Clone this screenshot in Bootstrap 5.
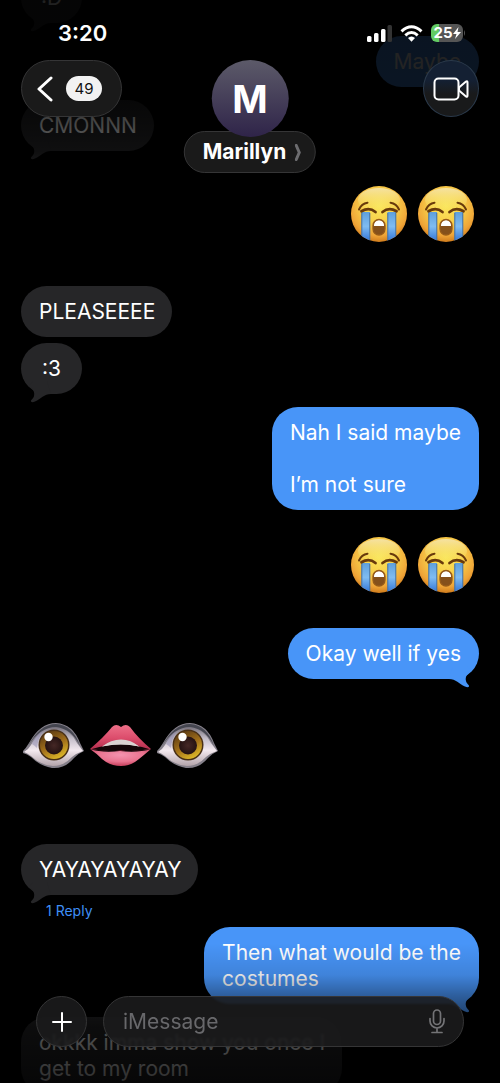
<!DOCTYPE html>
<html lang="en" data-bs-theme="dark">
<head>
<meta charset="utf-8">
<meta name="viewport" content="width=device-width, initial-scale=1">
<title>Marillyn</title>
<link href="https://cdn.jsdelivr.net/npm/bootstrap@5.3.0/dist/css/bootstrap.min.css" rel="stylesheet">
<style>
  body { background: #000; color: #fff; font-family: Inter, "Liberation Sans", sans-serif; font-size: 21px; line-height: 26px; }
  svg { display: block; }
  .screen { height: 100vh; }
  .thread { padding: 0 21px; margin-top: -28px; }
  .bubble { position: relative; flex: none; padding: 13px 17px 12px 18px; border-radius: 26px; background: #262628; min-width: 61px; max-width: 340px; }
  .bubble.sent { background: #4895f8; align-self: flex-end; padding-right: 18px; }
  .bubble.short { padding-left: 12px; padding-right: 12px; text-align: center; }
  .tail { position: absolute; left: 8px; bottom: -10px; width: 22px; height: 23px; fill: #262628; }
  .sent .tail { left: auto; right: 8px; transform: scaleX(-1); fill: #4895f8; }
  .faces { gap: 11px; padding-right: 5px; }
  .faces svg { width: 56px; height: 56px; }
  .parts { gap: 6px; padding-left: 2px; }
  .parts svg { width: 61px; height: 46px; }
  .reply { font-size: 14px; line-height: 16px; color: #3f8ff7; padding-left: 25px; }
  .gap-xs { margin-top: 6px; } .gap-sm { margin-top: 8px; } .gap-md { margin-top: 13px; } .gap-lg { margin-top: 27px; }
  .gap-xl { margin-top: 35px; } .gap-2x { margin-top: 44px; } .gap-3x { margin-top: 75px; }

  .top-area { background: linear-gradient(rgba(0,0,0,.87) 0, rgba(0,0,0,.86) 88px, rgba(0,0,0,.72) 126px, rgba(0,0,0,.6) 152px, rgba(0,0,0,0) 182px); height: 182px; }
  .status { height: 60px; padding: 6px 34px 0 58px; }
  .clock { font-size: 22px; font-weight: 600; }
  .battery { width: 32px; height: 18px; border-radius: 6px; background: linear-gradient(90deg, #63cb63 26%, #555 26%); font-size: 15px; line-height: 18px; font-weight: 700; }
  .glass { background: #1a1a1a; border: 1px solid #353536; color: #fff; padding: 0; }
  .back { width: 101px; height: 57px; border-radius: 29px; padding: 0 19px 0 15px; }
  .count { background: #f2f2f2; color: #111; border-radius: 13px; width: 36px; height: 25px; font-size: 15px; line-height: 25px; }
  .bar { padding: 0 21px; }
  .video { width: 56px; height: 57px; border-color: #2b3a4b; background: linear-gradient(#142033 35%, #191a1b 60%); }
  .contact { color: #fff; text-decoration: none; }
  .avatar { width: 77px; height: 77px; background: linear-gradient(#5c5a69, #2f2449); font-size: 38px; font-weight: 700; z-index: 1; }
  .person { height: 42px; margin-top: -6px; border-radius: 21px; padding: 0 13px 0 18px; font-size: 21px; font-weight: 700; gap: 9px; }

  .bottom-area { height: 140px; padding: 0 36px 36px; background: linear-gradient(rgba(0,0,0,0) 0, rgba(0,0,0,.12) 32px, rgba(0,0,0,.36) 52px, rgba(0,0,0,.5) 66px, rgba(0,0,0,.68) 84px, rgba(0,0,0,.82) 140px); }
  .bottom-area .glass { background: rgba(27,27,28,.88); backdrop-filter: blur(1px); }
  .plus { width: 51px; height: 51px; }
  .entry { height: 51px; min-width: 0; border-radius: 26px; padding: 0 17px 0 19px; }
  .entry input { background: none; border: 0; outline: 0; color: #fff; font-size: 21px; line-height: 26px; min-width: 0; padding: 0; }
  .entry input::placeholder { color: #68686b; opacity: 1; }
</style>
</head>
<body>
<svg width="0" height="0" class="position-absolute" aria-hidden="true">
  <defs>
    <radialGradient id="skin" cx=".5" cy=".36" r=".66"><stop offset="0" stop-color="#fae75c"/><stop offset=".45" stop-color="#f8cf4a"/><stop offset=".8" stop-color="#efa437"/><stop offset="1" stop-color="#c97418"/></radialGradient>
    <linearGradient id="shine" x1="0" y1="0" x2="0" y2="1"><stop offset="0" stop-color="#f5e3a8" stop-opacity=".95"/><stop offset="1" stop-color="#f9e75f" stop-opacity="0"/></linearGradient>
    <linearGradient id="tear" x1="0" y1="0" x2="0" y2="1"><stop offset="0" stop-color="#5e9fdc"/><stop offset=".45" stop-color="#7fbcf2"/><stop offset="1" stop-color="#2468d2"/></linearGradient>
    <clipPath id="disc"><circle cx="28" cy="28" r="28"/></clipPath>
    <symbol id="cry" viewBox="0 0 56 56">
      <circle cx="28" cy="28" r="28" fill="url(#skin)"/>
      <ellipse cx="28" cy="14" rx="21" ry="12" fill="url(#shine)"/>
      <g clip-path="url(#disc)">
        <path d="M10.500 26h8.500v32h-8.500zM36.500 26h8.500v32h-8.500z" fill="url(#tear)"/>
        <path d="M10.800 27v30M18.800 27v30M36.800 27v30M44.800 27v30" stroke="#466f9b" stroke-width="1"/>
      </g>
      <g fill="none" stroke="#683a0c" stroke-linecap="round">
        <path d="M8 23.500q2.500-6 8.500-6.800M39.500 16.700q6 .8 8.500 6.800" stroke-width="2"/>
        <path d="M10.500 25.300q7.500-4.600 14 .7M31.500 26q6.500-5.300 14-.7" stroke-width="2.800"/>
      </g>
      <rect x="22" y="33.500" width="12" height="15.500" rx="6" fill="#85501b"/>
      <path d="M23 40v-1a5 5 0 0 1 10 0v1z" fill="#fff"/>
      <rect x="22" y="33.500" width="12" height="15.500" rx="6" fill="none" stroke="#965a19" stroke-width="1.300"/>
    </symbol>
    <linearGradient id="lid" x1="0" y1="0" x2="0" y2="1"><stop offset="0" stop-color="#77727c"/><stop offset=".3" stop-color="#c5bfca"/><stop offset=".6" stop-color="#f3e9ef"/><stop offset="1" stop-color="#b3a4aa"/></linearGradient>
    <linearGradient id="iris" x1=".2" y1="0" x2=".7" y2="1"><stop offset="0" stop-color="#573713"/><stop offset=".55" stop-color="#a4721b"/><stop offset="1" stop-color="#e0bb29"/></linearGradient>
    <radialGradient id="pupil"><stop offset="0" stop-color="#452725"/><stop offset="1" stop-color="#241212"/></radialGradient>
    <symbol id="eye" viewBox="0 0 61 46">
      <path d="M0 28Q3 25 6 20Q17 0 33 0Q50 1 57 20L61 28Q56 30 51 35Q42 46 29 45Q17 43 8 34Q4 31 0 30Z" fill="#85808a"/>
      <path d="M1 29Q5 27 8 22Q18 4 33 4Q47 6 54 20L60 28Q54 30 49 34Q41 43 30 43Q17 42 8 33Q4 30 1 29Z" fill="url(#lid)"/>
      <path d="M5 23Q17 1 33 1Q50 2 57 23Q49 6 33 4Q17 4 5 23Z" fill="#454650"/>
      <path d="M9 21Q12 12 20 8Q15 15 14 25Q11 22 9 21Z" fill="#8985ac" opacity=".5"/>
      <circle cx="31" cy="22" r="15.500" fill="#493016"/><circle cx="31" cy="22" r="14" fill="url(#iris)"/>
      <circle cx="31" cy="22.500" r="9" fill="url(#pupil)"/><circle cx="25.500" cy="14" r="4.200" fill="#fff"/>
    </symbol>
    <linearGradient id="upper" x1="0" y1="0" x2="0" y2="1"><stop offset="0" stop-color="#ed6f88"/><stop offset=".5" stop-color="#dc4d6c"/><stop offset="1" stop-color="#ae2949"/></linearGradient>
    <radialGradient id="lower" cx=".5" cy=".35" r=".6"><stop offset="0" stop-color="#f493af"/><stop offset=".65" stop-color="#e9738f"/><stop offset="1" stop-color="#cb4764"/></radialGradient>
    <symbol id="lips" viewBox="0 0 61 46">
      <path d="M0 26Q14 14 22 4Q26 0 31 4Q36 0 40 4Q48 15 61 26Q49 28 31 28Q12 28 0 26Z" fill="url(#upper)"/>
      <path d="M12 24Q20 18 31 18Q42 18 50 24Q31 21 12 24Z" fill="#ece6e5"/>
      <path d="M0 26Q12 30 30 28Q48 30 61 26Q54 32 49 36Q41 43 31 43Q20 43 12 36Q6 30 0 26Z" fill="url(#lower)"/>
      <path d="M2 26Q31 17 59 26Q46 29 31 27.500Q14 29 2 26Z" fill="#120507"/>
      <path d="M12 23.500Q21 16.500 31 16.500Q41 16.500 49 23.500Q31 19 12 23.500Z" fill="#d9d2d1"/>
    </symbol>
    <symbol id="tailshape" viewBox="0 0 22 23"><path d="M0 5C4 8 6 11 5 15C4.500 18 1.500 18.500 2 20.500Q3 22 6 20.500C12 18 15 13 22 13L18 0H4Z"/></symbol>
  </defs>
</svg>

<div class="screen position-relative overflow-hidden">
  <main class="thread d-flex flex-column align-items-start">
    <div class="bubble short">:D<svg class="tail"><use href="#tailshape"/></svg></div>
    <div class="bubble sent gap-md">Maybe</div>
    <div class="bubble gap-md">CMONNN<svg class="tail"><use href="#tailshape"/></svg></div>
    <div class="faces d-flex align-self-end gap-xl" role="img" aria-label="Two crying faces"><svg><use href="#cry"/></svg><svg><use href="#cry"/></svg></div>
    <div class="bubble gap-2x">PLEASEEEE</div>
    <div class="bubble short gap-xs">:3<svg class="tail"><use href="#tailshape"/></svg></div>
    <div class="bubble sent gap-md">Nah I said maybe<br><br>I’m not sure</div>
    <div class="faces d-flex align-self-end gap-lg" role="img" aria-label="Two crying faces"><svg><use href="#cry"/></svg><svg><use href="#cry"/></svg></div>
    <div class="bubble sent gap-xl">Okay well if yes<svg class="tail"><use href="#tailshape"/></svg></div>
    <div class="parts d-flex gap-2x" role="img" aria-label="Eye, mouth, eye"><svg><use href="#eye"/></svg><svg><use href="#lips"/></svg><svg><use href="#eye"/></svg></div>
    <div class="bubble gap-3x">YAYAYAYAYAY<svg class="tail"><use href="#tailshape"/></svg></div>
    <a href="#" class="reply gap-sm text-decoration-none">1 Reply</a>
    <div class="bubble sent gap-sm">Then what would be the<br>costumes<svg class="tail"><use href="#tailshape"/></svg></div>
    <div class="bubble gap-md">okkkk imma show you once I<br>get to my room</div>
  </main>

  <header class="top-area position-absolute top-0 start-0 w-100">
    <div class="status d-flex align-items-center justify-content-between">
      <span class="clock">3:20</span>
      <div class="d-flex align-items-center">
        <svg width="25" height="17" fill="#fff"><rect y="11" width="4.500" height="6" rx="1.500"/><rect x="7" y="8" width="4.500" height="9" rx="1.500"/><rect x="14" y="4" width="4.500" height="13" rx="1.500"/><rect x="20.500" width="4.500" height="17" rx="1.500" fill="#333"/></svg>
        <svg class="ms-2" width="23" height="17" viewBox="0 0 23 17" fill="none" stroke="#fff" stroke-width="3"><path d="M1.500 6.300Q11.500-2.700 21.500 6.300M5.300 10.300Q11.500 4.800 17.700 10.300"/><path d="M8 13Q11.500 10 15 13L11.500 16.800Z" fill="#fff" stroke="none"/></svg>
        <div class="battery d-flex align-items-center justify-content-center ms-2"><span>25</span><svg width="8" height="12" viewBox="0 0 8 12" fill="#fff"><path d="M5.500 0L0 7h3.500L2 12l6-7H4.500z"/></svg></div>
        <svg width="3" height="6"><path d="M1 0q2 3 0 6z" fill="#555"/></svg>
      </div>
    </div>
    <nav class="bar position-relative d-flex justify-content-between align-items-start">
      <button type="button" class="glass back d-flex align-items-center justify-content-between" aria-label="Back, 49 unread">
        <svg width="16" height="26" viewBox="0 0 16 26" fill="none" stroke="#fff" stroke-width="3" stroke-linecap="round" stroke-linejoin="round"><path d="M14 2L2 13L14 24"/></svg>
        <span class="count">49</span>
      </button>
      <a href="#" class="contact position-absolute start-50 translate-middle-x d-flex flex-column align-items-center">
        <span class="avatar rounded-circle d-flex align-items-center justify-content-center position-relative">M</span>
        <span class="glass person d-flex align-items-center">Marillyn
          <svg width="7" height="17" viewBox="0 0 7 17" fill="none" stroke="#6c6c6f" stroke-width="3" stroke-linecap="round"><path d="M1.500 1.500Q3 5 4.500 8.500Q3 12 1.500 15.500"/></svg>
        </span>
      </a>
      <button type="button" class="glass video rounded-circle d-flex align-items-center justify-content-center" aria-label="Video call">
        <svg width="36" height="24" viewBox="0 0 36 24" fill="none" stroke="#fff" stroke-width="2" stroke-linejoin="round"><rect x="1.500" y="1.500" width="24" height="21" rx="4"/><path d="M26 10.500L33 4.500Q34.500 3.500 34.500 5.500V18.500Q34.500 20.500 33 19.500L26 13.500Z"/></svg>
      </button>
    </nav>
  </header>

  <footer class="bottom-area position-absolute bottom-0 start-0 w-100 d-flex align-items-end gap-3">
    <button type="button" class="glass plus rounded-circle flex-shrink-0 d-flex align-items-center justify-content-center" aria-label="Add">
      <svg width="20" height="20" stroke="#fff" stroke-width="2" stroke-linecap="round"><path d="M10 1v18M1 10h18"/></svg>
    </button>
    <div class="glass entry flex-grow-1 d-flex align-items-center">
      <input type="text" class="w-100" placeholder="iMessage" aria-label="iMessage">
      <button type="button" class="btn p-0 border-0 flex-shrink-0" aria-label="Dictate">
        <svg width="18" height="25" viewBox="0 0 18 25" fill="none" stroke="#737376" stroke-width="1.700" stroke-linecap="round"><rect x="5.500" y="1" width="7" height="14.500" rx="3.500"/><path d="M2 9.500V12a7 7 0 0 0 14 0V9.500M9 19v4M4 23.500h10"/></svg>
      </button>
    </div>
  </footer>
</div>
<script src="https://cdn.jsdelivr.net/npm/bootstrap@5.3.0/dist/js/bootstrap.bundle.min.js"></script>
</body>
</html>
